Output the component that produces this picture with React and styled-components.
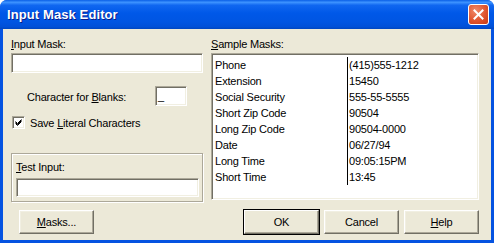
import React from 'react';
import styled, { createGlobalStyle } from 'styled-components';

const GlobalStyle = createGlobalStyle`
  * { box-sizing: border-box; }
  body {
    margin: 0;
    background: #ffffff;
    font-family: "Liberation Sans", Arial, sans-serif;
  }
`;

const samples = [
  ['Phone', '(415)555-1212'],
  ['Extension', '15450'],
  ['Social Security', '555-55-5555'],
  ['Short Zip Code', '90504'],
  ['Long Zip Code', '90504-0000'],
  ['Date', '06/27/94'],
  ['Long Time', '09:05:15PM'],
  ['Short Time', '13:45'],
];

const Window = styled('div')`
  width: 494px;
  height: 243px;
  display: flex;
  flex-direction: column;
  background: #0553e1;
  border-radius: 7px 7px 0 0;
  overflow: hidden;
`;

const TitleBar = styled('div')`
  height: 29px;
  flex: none;
  display: flex;
  align-items: center;
  justify-content: space-between;
  padding: 0 5px 0 7px;
  background: linear-gradient(
    #0a5fe6 0%,
    #3d93ff 8%,
    #1067f0 18%,
    #0058e8 45%,
    #0055e2 75%,
    #0050d8 92%,
    #0046c0 100%
  );
`;

const Title = styled('span')`
  color: #ffffff;
  font-size: 13px;
  font-weight: bold;
  text-shadow: 1px 1px #0a1e8a;
  letter-spacing: 0.1px;
`;

const CloseButton = styled('div')`
  width: 21px;
  height: 21px;
  border: 1px solid #ffffff;
  border-radius: 3px;
  background: radial-gradient(circle at 35% 30%, #f08a6a 0%, #e0552f 55%, #c63a14 100%);
  display: flex;
  align-items: center;
  justify-content: center;
`;

const Client = styled('div')`
  flex: 1;
  margin: 0 3px 3px 3px;
  background: #ece9d8;
  display: flex;
  gap: 8px;
  padding: 9px 12px 6px 8px;
  font-size: 11px;
  letter-spacing: -0.2px;
  color: #000000;
`;

const Column = styled('div')`
  width: ${p => p.$width}px;
  display: flex;
  flex-direction: column;
`;

const Label = styled('div')`
  height: 13px;
  line-height: 13px;
  margin-bottom: ${p => p.$gap || 2}px;
  white-space: nowrap;
`;

const Mn = styled('span')`
  text-decoration: underline;
`;

const Sunken = styled('div')`
  height: ${p => p.$h || 20}px;
  width: ${p => (p.$w ? p.$w + 'px' : 'auto')};
  background: #ffffff;
  border: 1px solid;
  border-color: #aca899 #ffffff #ffffff #aca899;
  box-shadow: inset 1px 1px #716f64, inset -1px -1px #f1efe2;
  padding: 2px 2px;
  line-height: 14px;
`;

const BlanksRow = styled('div')`
  display: flex;
  align-items: center;
  margin-top: 13px;
  padding-left: 16px;
`;

const BlanksLabel = styled('span')`
  width: 128px;
  margin-top: 2px;
`;

const CheckRow = styled('div')`
  display: flex;
  align-items: center;
  gap: 5px;
  margin-top: 10px;
  padding-left: 1px;
`;

const CheckBox = styled('div')`
  width: 13px;
  height: 13px;
  background: #ffffff;
  border: 1px solid;
  border-color: #aca899 #ffffff #ffffff #aca899;
  box-shadow: inset 1px 1px #716f64, inset -1px -1px #f1efe2;
  display: flex;
  align-items: center;
  justify-content: center;
`;

const GroupBox = styled('div')`
  margin-top: 24px;
  height: 49px;
  border: 1px solid #aca899;
  box-shadow: inset 1px 1px #ffffff, 1px 1px #ffffff;
  padding: 7px 3px 3px 4px;
`;

const ButtonRow = styled('div')`
  margin-top: auto;
  display: flex;
  justify-content: ${p => (p.$end ? 'flex-end' : 'flex-start')};
  gap: 5px;
  padding-left: ${p => p.$indent || 0}px;
`;

const Button = styled('div')`
  width: ${p => p.$w || 75}px;
  height: 24px;
  display: flex;
  align-items: center;
  justify-content: center;
  background: #ece9d8;
  border: 1px solid;
  border-color: #ffffff #716f64 #716f64 #ffffff;
  box-shadow: ${p =>
    p.$default
      ? '0 0 0 1px #000000, inset -1px -1px #aca899'
      : 'inset -1px -1px #aca899, inset 1px 1px #f1efe2'};
  font-size: 11px;
`;

const ListBox = styled('div')`
  height: 147px;
  background: #ffffff;
  border: 1px solid;
  border-color: #aca899 #ffffff #ffffff #aca899;
  box-shadow: inset 1px 1px #716f64, inset -1px -1px #f1efe2;
  padding: 3px 2px 0 2px;
  display: grid;
  grid-template-columns: 133px 1fr;
  grid-auto-rows: 16px;
  align-content: start;
`;

const Cell = styled('div')`
  line-height: 16px;
  padding-left: ${p => (p.$value ? 1 : 1)}px;
  border-left: ${p => (p.$value ? '1px solid #000000' : 'none')};
  white-space: nowrap;
`;

export default function App() {
  return (
    <>
      <GlobalStyle />
      <Window>
        <TitleBar>
          <Title>Input Mask Editor</Title>
          <CloseButton>
            <svg width="11" height="11" viewBox="0 0 11 11">
              <path d="M1.5 1.5 L9.5 9.5 M9.5 1.5 L1.5 9.5" stroke="#ffffff" strokeWidth="2" strokeLinecap="square" />
            </svg>
          </CloseButton>
        </TitleBar>
        <Client>
          <Column $width={192}>
            <Label><Mn>I</Mn>nput Mask:</Label>
            <Sunken />
            <BlanksRow>
              <BlanksLabel>Character for <Mn>B</Mn>lanks:</BlanksLabel>
              <Sunken $w={32}>_</Sunken>
            </BlanksRow>
            <CheckRow>
              <CheckBox>
                <svg width="7" height="7" viewBox="0 0 7 7">
                  <path d="M0.5 2.5 L2.5 4.5 L6.5 0.5 M0.5 3.5 L2.5 5.5 L6.5 1.5 M0.5 4.5 L2.5 6.5 L6.5 2.5" stroke="#000000" strokeWidth="1" fill="none" />
                </svg>
              </CheckBox>
              <span>Save <Mn>L</Mn>iteral Characters</span>
            </CheckRow>
            <GroupBox>
              <Label $gap={4}><Mn>T</Mn>est Input:</Label>
              <Sunken $h={19} />
            </GroupBox>
            <ButtonRow $indent={8}>
              <Button><span><Mn>M</Mn>asks...</span></Button>
            </ButtonRow>
          </Column>
          <Column $width={268}>
            <Label><Mn>S</Mn>ample Masks:</Label>
            <ListBox>
              {samples.map(([name, mask]) => (
                <React.Fragment key={name}>
                  <Cell>{name}</Cell>
                  <Cell $value>{mask}</Cell>
                </React.Fragment>
              ))}
            </ListBox>
            <ButtonRow $end>
              <Button $default>OK</Button>
              <Button>Cancel</Button>
              <Button><span><Mn>H</Mn>elp</span></Button>
            </ButtonRow>
          </Column>
        </Client>
      </Window>
    </>
  );
}
